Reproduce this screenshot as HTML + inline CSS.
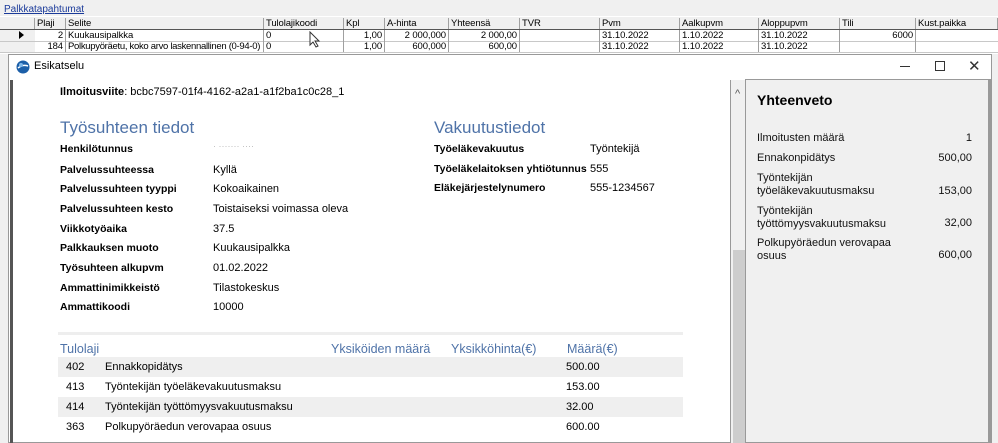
<!DOCTYPE html><html><head><meta charset="utf-8"><style>
*{margin:0;padding:0;box-sizing:border-box}
body{width:998px;height:443px;overflow:hidden;background:#f0f0f0;font-family:"Liberation Sans",Arial,sans-serif;position:relative;color:#000}
.a{position:absolute;white-space:nowrap}
.g{font-size:10px}
.cell{position:absolute;height:11px;border-right:1px solid #a0a0a0;font-size:9.5px;line-height:11px;padding:0 2px;overflow:hidden;white-space:nowrap;letter-spacing:-0.1px}
.l{font-size:10.5px;font-weight:bold}
.v{font-size:11px}
.h{font-size:17px;color:#4f73a8}
.th{font-size:12.5px;color:#4f73a8}
.row{position:absolute;left:58px;width:625px;height:20px;font-size:11px;line-height:20px}
.s{font-size:11px;color:#111}
</style></head><body>
<div class="a g" style="left:4px;top:4px;color:#1a3a9a;text-decoration:underline;font-size:10px">Palkkatapahtumat</div>
<div style="position:absolute;left:0;top:16px;width:998px;height:38px;background:#fff"></div>
<div style="position:absolute;left:0;top:17px;width:998px;height:13px;background:#f0f0f0;border-bottom:1px solid #555"></div>
<div style="position:absolute;left:0;top:30px;width:35px;height:22px;background:#f0f0f0"></div>
<div style="position:absolute;left:0;top:41px;width:998px;border-top:1px solid #c8c8c8"></div>
<div style="position:absolute;left:0;top:52px;width:998px;border-top:1px solid #c8c8c8"></div>
<div class="a" style="left:19px;top:31px;width:0;height:0;border-left:5px solid #000;border-top:4px solid transparent;border-bottom:4px solid transparent"></div>
<div class="cell" style="left:0;top:18px;width:35px"></div>
<div class="cell" style="left:35px;top:18px;width:31px">Plaji</div>
<div class="cell" style="left:66px;top:18px;width:198px">Selite</div>
<div class="cell" style="left:264px;top:18px;width:80px">Tulolajikoodi</div>
<div class="cell" style="left:344px;top:18px;width:41px">Kpl</div>
<div class="cell" style="left:385px;top:18px;width:64px">A-hinta</div>
<div class="cell" style="left:449px;top:18px;width:71px">Yhteensä</div>
<div class="cell" style="left:520px;top:18px;width:80px">TVR</div>
<div class="cell" style="left:600px;top:18px;width:80px">Pvm</div>
<div class="cell" style="left:680px;top:18px;width:79px">Aalkupvm</div>
<div class="cell" style="left:759px;top:18px;width:81px">Aloppupvm</div>
<div class="cell" style="left:840px;top:18px;width:76px">Tili</div>
<div class="cell" style="left:916px;top:18px;width:82px">Kust.paikka</div>
<div class="cell" style="left:35px;top:30px;width:31px;text-align:right">2</div>
<div class="cell" style="left:66px;top:30px;width:198px">Kuukausipalkka</div>
<div class="cell" style="left:264px;top:30px;width:80px">0</div>
<div class="cell" style="left:344px;top:30px;width:41px;text-align:right">1,00</div>
<div class="cell" style="left:385px;top:30px;width:64px;text-align:right">2 000,000</div>
<div class="cell" style="left:449px;top:30px;width:71px;text-align:right">2 000,00</div>
<div class="cell" style="left:520px;top:30px;width:80px"></div>
<div class="cell" style="left:600px;top:30px;width:80px">31.10.2022</div>
<div class="cell" style="left:680px;top:30px;width:79px">1.10.2022</div>
<div class="cell" style="left:759px;top:30px;width:81px">31.10.2022</div>
<div class="cell" style="left:840px;top:30px;width:76px;text-align:right">6000</div>
<div class="cell" style="left:35px;top:41px;width:31px;text-align:right">184</div>
<div class="cell" style="left:66px;top:41px;width:198px;letter-spacing:-0.3px">Polkupyöräetu, koko arvo laskennallinen (0-94-0)</div>
<div class="cell" style="left:264px;top:41px;width:80px">0</div>
<div class="cell" style="left:344px;top:41px;width:41px;text-align:right">1,00</div>
<div class="cell" style="left:385px;top:41px;width:64px;text-align:right">600,000</div>
<div class="cell" style="left:449px;top:41px;width:71px;text-align:right">600,00</div>
<div class="cell" style="left:520px;top:41px;width:80px"></div>
<div class="cell" style="left:600px;top:41px;width:80px">31.10.2022</div>
<div class="cell" style="left:680px;top:41px;width:79px">1.10.2022</div>
<div class="cell" style="left:759px;top:41px;width:81px">31.10.2022</div>
<div class="cell" style="left:840px;top:41px;width:76px"></div>
<div style="position:absolute;left:8px;top:54px;width:984px;height:389px;background:#fff;border:1px solid #999"></div>
<div style="position:absolute;left:10px;top:80px;width:3px;height:363px;background:#555"></div>
<svg class="a" style="left:16px;top:60px" width="14" height="14" viewBox="0 0 14 14"><circle cx="7" cy="7" r="6.5" fill="#1c5fa8"/><path d="M2 8 Q7 4 12 6" stroke="#fff" stroke-width="1.5" fill="none"/><circle cx="5" cy="5" r="2" fill="#7fb8ea"/></svg>
<div class="a" style="left:34px;top:60px;font-size:11px">Esikatselu</div>
<div class="a" style="left:900px;top:66px;width:10px;border-top:1px solid #333"></div>
<div class="a" style="left:935px;top:61px;width:10px;height:10px;border:1px solid #333"></div>
<div class="a" style="left:968px;top:57px;font-size:15px;color:#333">✕</div>
<div class="a v" style="left:60px;top:86px"><b>Ilmoitusviite</b>: bcbc7597-01f4-4162-a2a1-a1f2ba1c0c28_1</div>
<div class="a h" style="left:60px;top:118px">Työsuhteen tiedot</div>
<div class="a h" style="left:434px;top:118px">Vakuutustiedot</div>
<div class="a l" style="left:60px;top:143px">Henkilötunnus</div><div class="a v" style="left:213px;top:141px;color:#bbb;font-size:9px">· ······· ····</div>
<div class="a l" style="left:60px;top:164px">Palvelussuhteessa</div><div class="a v" style="left:213px;top:164px">Kyllä</div>
<div class="a l" style="left:60px;top:183px">Palvelussuhteen tyyppi</div><div class="a v" style="left:213px;top:183px">Kokoaikainen</div>
<div class="a l" style="left:60px;top:203px">Palvelussuhteen kesto</div><div class="a v" style="left:213px;top:203px">Toistaiseksi voimassa oleva</div>
<div class="a l" style="left:60px;top:223px">Viikkotyöaika</div><div class="a v" style="left:213px;top:223px">37.5</div>
<div class="a l" style="left:60px;top:242px">Palkkauksen muoto</div><div class="a v" style="left:213px;top:242px">Kuukausipalkka</div>
<div class="a l" style="left:60px;top:262px">Työsuhteen alkupvm</div><div class="a v" style="left:213px;top:262px">01.02.2022</div>
<div class="a l" style="left:60px;top:282px">Ammattinimikkeistö</div><div class="a v" style="left:213px;top:282px">Tilastokeskus</div>
<div class="a l" style="left:60px;top:301px">Ammattikoodi</div><div class="a v" style="left:213px;top:301px">10000</div>
<div class="a l" style="left:434px;top:143px">Työeläkevakuutus</div><div class="a v" style="left:590px;top:143px">Työntekijä</div>
<div class="a l" style="left:434px;top:163px">Työeläkelaitoksen yhtiötunnus</div><div class="a v" style="left:590px;top:163px">555</div>
<div class="a l" style="left:434px;top:182px">Eläkejärjestelynumero</div><div class="a v" style="left:590px;top:182px">555-1234567</div>
<div class="a" style="left:58px;top:332px;width:625px;height:3px;background:#eee"></div>
<div class="a th" style="left:60px;top:342px">Tulolaji</div>
<div class="a th" style="left:331px;top:342px">Yksiköiden määrä</div>
<div class="a th" style="left:451px;top:342px">Yksikköhinta(€)</div>
<div class="a th" style="left:567px;top:342px">Määrä(€)</div>
<div class="row" style="top:357px;background:#efefef"><span class="a" style="left:8px">402</span><span class="a" style="left:47px">Ennakkopidätys</span><span class="a" style="left:508px">500.00</span></div>
<div class="row" style="top:377px"><span class="a" style="left:8px">413</span><span class="a" style="left:47px">Työntekijän työeläkevakuutusmaksu</span><span class="a" style="left:508px">153.00</span></div>
<div class="row" style="top:397px;background:#efefef"><span class="a" style="left:8px">414</span><span class="a" style="left:47px">Työntekijän työttömyysvakuutusmaksu</span><span class="a" style="left:508px">32.00</span></div>
<div class="row" style="top:417px"><span class="a" style="left:8px">363</span><span class="a" style="left:47px">Polkupyöräedun verovapaa osuus</span><span class="a" style="left:508px">600.00</span></div>
<div class="a" style="left:730px;top:80px;width:16px;height:363px;background:#f0f0f0;border-left:1px solid #999"></div>
<div class="a" style="left:733px;top:250px;width:12px;height:193px;background:#cdcdcd"></div>
<div class="a" style="left:735px;top:88px;font-size:11px;color:#555">^</div>
<div class="a" style="left:745px;top:79px;width:246px;height:364px;background:#f0f0f0;border:1px solid #999;border-right:3px solid #999"></div>
<div class="a" style="left:757px;top:92px;font-size:14px;font-weight:bold">Yhteenveto</div>
<div class="a s" style="left:757px;top:132px">Ilmoitusten määrä</div><div class="a s" style="left:930px;top:132px;width:42px;text-align:right">1</div>
<div class="a s" style="left:757px;top:152px">Ennakonpidätys</div><div class="a s" style="left:930px;top:152px;width:42px;text-align:right">500,00</div>
<div class="a s" style="left:757px;top:172px;line-height:13px">Työntekijän<br>työeläkevakuutusmaksu</div><div class="a s" style="left:930px;top:185px;width:42px;text-align:right">153,00</div>
<div class="a s" style="left:757px;top:205px;line-height:13px">Työntekijän<br>työttömyysvakuutusmaksu</div><div class="a s" style="left:930px;top:217px;width:42px;text-align:right">32,00</div>
<div class="a s" style="left:757px;top:237px;line-height:13px">Polkupyöräedun verovapaa<br>osuus</div><div class="a s" style="left:930px;top:249px;width:42px;text-align:right">600,00</div>
<svg class="a" style="left:309px;top:31px" width="12" height="17" viewBox="0 0 12 17"><path d="M1 1 L1 14 L4 11 L7 16 L9 15 L6 10 L10 10 Z" fill="#fff" stroke="#333" stroke-width="1"/></svg>
</body></html>
